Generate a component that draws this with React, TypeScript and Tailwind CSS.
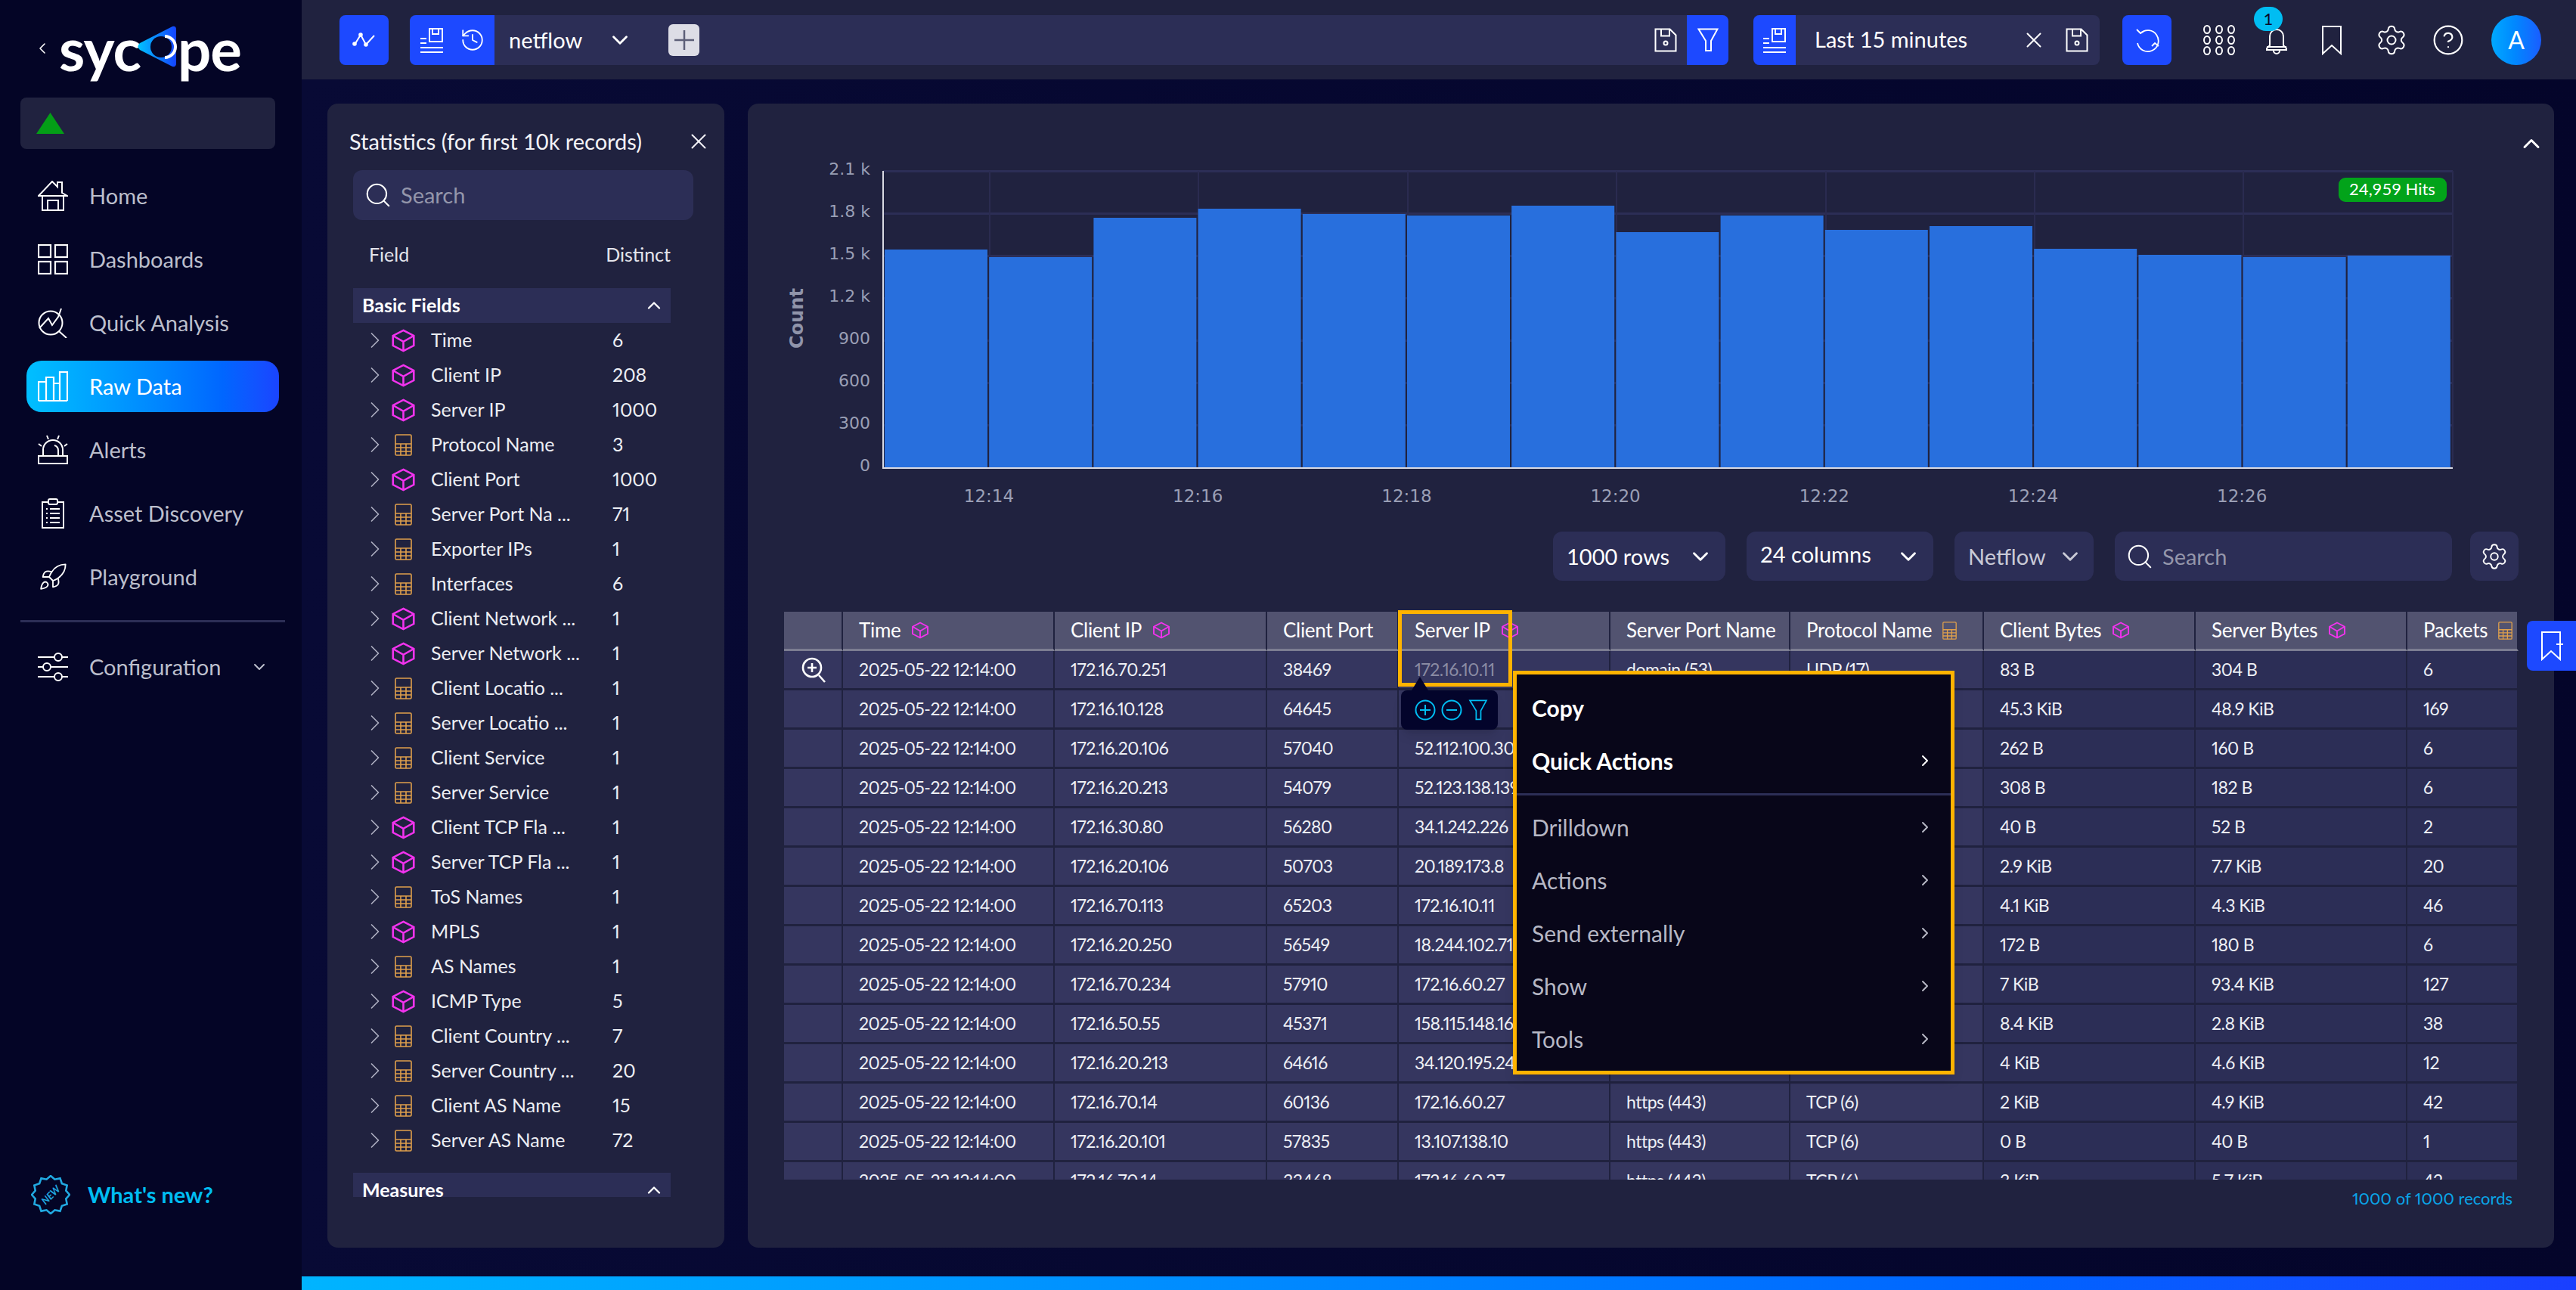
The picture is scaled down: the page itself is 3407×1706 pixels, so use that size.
import { ChevronDown, ChevronLeft, ChevronRight, ChevronUp, CircleHelp, History, Rocket, Search, Settings, X } from "lucide-react";

const font = { fontFamily: '"Lato", "Open Sans", sans-serif' };

/* icons ------------------------------------------------------------------ */
const Cube = ({ className = "w-[33px] h-[31px]" }: { className?: string }) => (
  <svg viewBox="0 0 24 24" preserveAspectRatio="none" className={className} fill="none" stroke="#f233ee" strokeWidth="1.9">
    <path d="M12 1.5 22 7v10l-10 5.5L2 17V7Z" />
    <path d="M2 7l10 6 10-6M12 13v9.5" />
  </svg>
);

const Calc = ({ className = "w-[23px] h-[29px]" }: { className?: string }) => (
  <svg viewBox="0 0 23 29" className={className} fill="none" stroke="#dfa04c" strokeWidth="1.6">
    <rect x="1" y="1" width="21" height="27" rx="1.5" />
    <path d="M1 13h21M1 18h21M1 23h21M8 13v15M15 13v15" />
  </svg>
);

const ListSave = () => (
  <svg viewBox="0 0 34 34" className="w-[34px] h-[34px]" fill="none" stroke="white" strokeWidth="2">
    <path d="M14 2h17v17H14zM18 2v7h8V2" />
    <path d="M2 15h8M2 21h8M2 27h30M2 33h30" />
  </svg>
);

const Save = () => (
  <svg viewBox="0 0 30 32" className="w-[30px] h-[32px]" fill="none" stroke="white" strokeWidth="2">
    <path d="M1.5 1.5h19l8 8v21h-27Z" />
    <path d="M9 1.5v9h11v-9" />
    <circle cx="15" cy="20" r="2.5" />
  </svg>
);

const Funnel = ({ color = "white", className = "w-[28px] h-[32px]" }: { color?: string; className?: string }) => (
  <svg viewBox="0 0 28 32" className={className} fill="none" stroke={color} strokeWidth="2">
    <path d="M1.5 1.5h25L18 17v13h-7V17Z" />
  </svg>
);

const Bookmark = ({ plus = false }: { plus?: boolean }) => (
  <svg viewBox="0 0 30 40" className="w-[30px] h-[40px]" fill="none" stroke="white" strokeWidth="2">
    <path d="M2 38V2h24v36L14 27Z" />
    {plus && <path d="M26 13v10M21 18h9" />}
  </svg>
);

const AppsGrid = () => (
  <svg viewBox="0 0 42 40" className="w-[42px] h-[40px]" fill="none" stroke="white" strokeWidth="2">
    {[6, 20, 34].map((y) => [5, 21, 37].map((x) => <ellipse key={`${x}-${y}`} cx={x} cy={y} rx="4" ry="5" />))}
  </svg>
);

const Bell = () => (
  <svg viewBox="0 0 32 38" className="w-[32px] h-[38px]" fill="none" stroke="white" strokeWidth="2">
    <path d="M7 26V14a9 9 0 0 1 18 0v12l4 4v2H3v-2ZM3 28h26M12 33a4 4 0 0 0 8 0M16 2v3" />
  </svg>
);

const HomeIcon = () => (
  <svg viewBox="0 0 40 40" className="w-[40px] h-[40px]" fill="none" stroke="white" strokeWidth="2">
    <path d="M1 20 19 1l7 7V2h6v14l7 4Z" />
    <path d="M6 20v19h28V20M13 39V26h14v13" />
  </svg>
);

const DashIcon = () => (
  <svg viewBox="0 0 40 40" className="w-[40px] h-[40px]" fill="none" stroke="white" strokeWidth="2.2">
    <rect x="1" y="1" width="16" height="16" />
    <rect x="23" y="1" width="16" height="16" />
    <rect x="1" y="23" width="16" height="16" />
    <rect x="23" y="23" width="16" height="16" />
  </svg>
);

const AnalysisIcon = () => (
  <svg viewBox="0 0 40 40" className="w-[40px] h-[40px]" fill="none" stroke="white" strokeWidth="2">
    <circle cx="17" cy="20" r="15.5" />
    <path d="M2 27 14 14l5 9 8-11 4-11M28 31l10 9" />
  </svg>
);

const BarsIcon = () => (
  <svg viewBox="0 0 40 40" className="w-[40px] h-[40px]" fill="none" stroke="white" strokeWidth="2.2">
    <path d="M1 39V14h10v25M11 39V8h10v31M21 39V16h8v23M29 39V1h10v38M1 39h38" />
  </svg>
);

const SirenIcon = () => (
  <svg viewBox="0 0 40 40" className="w-[40px] h-[40px]" fill="none" stroke="white" strokeWidth="2">
    <path d="M7 28V20a13 13 0 0 1 26 0v8M1 28h38v10H1ZM22 14a7 7 0 0 1 5 7v7M1 12l4 3M39 12l-4 3M12 1l2 5M28 1l-2 5" />
  </svg>
);

const ClipIcon = () => (
  <svg viewBox="0 0 32 40" className="w-[32px] h-[40px]" fill="none" stroke="white" strokeWidth="2">
    <path d="M10 5H2v34h28V5h-8" />
    <rect x="10" y="1" width="12" height="7" rx="2" />
    <path d="M7 14h2M12 14h13M7 20h2M12 20h13M7 26h2M12 26h13M7 32h2M12 32h13" />
  </svg>
);

const SlidersIcon = () => (
  <svg viewBox="0 0 40 40" className="w-[40px] h-[40px]" fill="none" stroke="white" strokeWidth="2">
    <path d="M0 7h22M32 7h8M0 20h7M17 20h23M0 33h22M32 33h8" />
    <circle cx="27" cy="7" r="5" />
    <circle cx="12" cy="20" r="5" />
    <circle cx="27" cy="33" r="5" />
  </svg>
);

const NewBadge = () => {
  const pts = Array.from({ length: 24 }, (_, i) => {
    const a = (i / 24) * Math.PI * 2;
    const r = i % 2 ? 21 : 25;
    return `${26 + r * Math.cos(a)},${26 + r * Math.sin(a)}`;
  }).join(" ");
  return (
    <svg viewBox="0 0 52 52" className="w-[52px] h-[52px]">
      <polygon points={pts} fill="none" stroke="#21a9e1" strokeWidth="2.6" />
      <text x="26" y="31" textAnchor="middle" fontSize="13" fontWeight="700" fontStyle="italic" fill="#21a9e1" transform="rotate(-45 26 26)" style={font}>
        NEW
      </text>
    </svg>
  );
};

const Logo = () => (
  <div className="flex items-center text-white font-bold text-[78px] leading-none tracking-[-1px] h-[60px]">
    <span>syc</span>
    <svg viewBox="0 0 54 55" className="w-[54px] h-[55px] -mt-1 -ml-[4px] -mr-[1px]">
      <defs>
        <linearGradient id="logo-g" x1="0" x2="1" y1="0" y2="0">
          <stop offset="0" stopColor="#00c3ff" />
          <stop offset="1" stopColor="#1544ff" />
        </linearGradient>
      </defs>
      <path d="M46 1 3 23q-5 4 0 9l43 22q5 1 5-4V5q0-5-5-4Z" fill="url(#logo-g)" />
      <circle cx="31" cy="28" r="14" fill="#050627" />
      <path d="M36 14a14 14 0 0 1 0 28" fill="none" stroke="white" strokeWidth="4" />
    </svg>
    <span>pe</span>
  </div>
);

/* data ------------------------------------------------------------------- */
const navItems = [
  { label: "Home", icon: <HomeIcon /> },
  { label: "Dashboards", icon: <DashIcon /> },
  { label: "Quick Analysis", icon: <AnalysisIcon /> },
  { label: "Raw Data", icon: <BarsIcon />, active: true },
  { label: "Alerts", icon: <SirenIcon /> },
  { label: "Asset Discovery", icon: <ClipIcon /> },
  { label: "Playground", icon: <Rocket size={40} strokeWidth={1.1} color="white" /> },
];

const fields: [string, string, boolean][] = [
  ["Time", "6", true],
  ["Client IP", "208", true],
  ["Server IP", "1000", true],
  ["Protocol Name", "3", false],
  ["Client Port", "1000", true],
  ["Server Port Na ...", "71", false],
  ["Exporter IPs", "1", false],
  ["Interfaces", "6", false],
  ["Client Network ...", "1", true],
  ["Server Network ...", "1", true],
  ["Client Locatio ...", "1", false],
  ["Server Locatio ...", "1", false],
  ["Client Service", "1", false],
  ["Server Service", "1", false],
  ["Client TCP Fla ...", "1", true],
  ["Server TCP Fla ...", "1", true],
  ["ToS Names", "1", false],
  ["MPLS", "1", true],
  ["AS Names", "1", false],
  ["ICMP Type", "5", true],
  ["Client Country ...", "7", false],
  ["Server Country ...", "20", false],
  ["Client AS Name", "15", false],
  ["Server AS Name", "72", false],
];

const columns: [string, "cube" | "calc" | null][] = [
  ["Time", "cube"],
  ["Client IP", "cube"],
  ["Client Port", null],
  ["Server IP", "cube"],
  ["Server Port Name", null],
  ["Protocol Name", "calc"],
  ["Client Bytes", "cube"],
  ["Server Bytes", "cube"],
  ["Packets", "calc"],
];

const rows = [
  ["172.16.70.251", "38469", "172.16.10.11", "domain (53)", "UDP (17)", "83 B", "304 B", "6"],
  ["172.16.10.128", "64645", "172.16.10.11", "https (443)", "TCP (6)", "45.3 KiB", "48.9 KiB", "169"],
  ["172.16.20.106", "57040", "52.112.100.30", "https (443)", "TCP (6)", "262 B", "160 B", "6"],
  ["172.16.20.213", "54079", "52.123.138.139", "https (443)", "TCP (6)", "308 B", "182 B", "6"],
  ["172.16.30.80", "56280", "34.1.242.226", "https (443)", "TCP (6)", "40 B", "52 B", "2"],
  ["172.16.20.106", "50703", "20.189.173.8", "https (443)", "TCP (6)", "2.9 KiB", "7.7 KiB", "20"],
  ["172.16.70.113", "65203", "172.16.10.11", "https (443)", "TCP (6)", "4.1 KiB", "4.3 KiB", "46"],
  ["172.16.20.250", "56549", "18.244.102.71", "https (443)", "TCP (6)", "172 B", "180 B", "6"],
  ["172.16.70.234", "57910", "172.16.60.27", "https (443)", "TCP (6)", "7 KiB", "93.4 KiB", "127"],
  ["172.16.50.55", "45371", "158.115.148.16", "https (443)", "TCP (6)", "8.4 KiB", "2.8 KiB", "38"],
  ["172.16.20.213", "64616", "34.120.195.24", "https (443)", "TCP (6)", "4 KiB", "4.6 KiB", "12"],
  ["172.16.70.14", "60136", "172.16.60.27", "https (443)", "TCP (6)", "2 KiB", "4.9 KiB", "42"],
  ["172.16.20.101", "57835", "13.107.138.10", "https (443)", "TCP (6)", "0 B", "40 B", "1"],
  ["172.16.70.14", "33468", "172.16.60.27", "https (443)", "TCP (6)", "3 KiB", "5.7 KiB", "42"],
];

const barTops = [330, 340, 288, 276, 283, 285, 272, 307, 285, 304, 299, 329, 337, 340, 338];
const yLabels = ["2.1 k", "1.8 k", "1.5 k", "1.2 k", "900", "600", "300", "0"];
const xTicks = ["12:14", "12:16", "12:18", "12:20", "12:22", "12:24", "12:26"];

const GRID_COLS = "grid grid-cols-[78px_280px_281px_174px_280px_238px_256px_280px_280px_147px]";

/* histogram, coordinates are relative to the card's top-left corner ------- */
function Histogram() {
  const ox = 989;
  const oy = 137;
  return (
    <svg width="2389" height="566" className="block" fontFamily='"DejaVu Sans", sans-serif'>
      {yLabels.map((_, i) => (
        <rect key={i} x={1168 - ox} y={225 + i * 56 - oy} width="2076" height="3" fill="#2c2e56" />
      ))}
      {[1308, 1584, 1861, 2137, 2414, 2690, 2966, 3243].map((x) => (
        <rect key={x} x={x - ox} y={226 - oy} width="2" height="392" fill="#2a2b50" />
      ))}
      {barTops.map((top, i) => (
        <rect key={i} x={1170 + i * 138.2 - ox} y={top - oy} width="136" height={618 - top} fill="#286fdd" />
      ))}
      <rect x={1167 - ox} y={226 - oy} width="2" height="394" fill="#d9dae3" />
      <rect x={1167 - ox} y={618 - oy} width="2077" height="2" fill="#d9dae3" />
      {yLabels.map((l, i) => (
        <text key={l} x={1151 - ox} y={231 + i * 56 - oy} textAnchor="end" fontSize="22" fill="#9a9fb5">
          {l}
        </text>
      ))}
      {xTicks.map((t, i) => (
        <text key={t} x={1308 + i * 276.2 - ox} y={664 - oy} textAnchor="middle" fontSize="23" fill="#9a9fb5">
          {t}
        </text>
      ))}
      <text x="0" y="0" transform={`translate(${1062 - ox} ${421 - oy}) rotate(-90)`} textAnchor="middle" fontSize="24" fontWeight="700" fill="#9094aa">
        Count
      </text>
      <rect x={3093 - ox} y={235 - oy} width="143" height="32" rx="9" fill="#02a31a" />
      <text x={3164 - ox} y={258 - oy} textAnchor="middle" fontSize="22" fill="white" style={font}>
        24,959 Hits
      </text>
    </svg>
  );
}

function Sidebar() {
  return (
    <aside className="w-[399px] shrink-0 bg-[#040526] flex flex-col">
      <div className="flex items-center h-[129px] pl-[44px] pb-[2px]">
        <ChevronLeft size={24} color="white" strokeWidth={1.6} className="mr-[10px]" />
        <Logo />
      </div>
      <div className="mx-[27px] w-[337px] h-[68px] bg-[#20223f] rounded-lg flex items-center pl-[21px]">
        <div className="w-[37px] h-[28px] bg-[#049e17] [clip-path:polygon(50%_0,100%_100%,0_100%)]" />
      </div>
      <nav className="mt-[28px] flex flex-col gap-[16px] pl-[35px]">
        {navItems.map((n) => (
          <div
            key={n.label}
            className={`w-[334px] h-[68px] rounded-[20px] flex items-center pl-[15px] text-[29px] ${
              n.active ? "bg-gradient-to-r from-[#00bfff] to-[#1a44ff] text-white" : "text-[#bcbfcc]"
            }`}
          >
            <span className="w-[40px] h-[40px] flex items-center justify-center">{n.icon}</span>
            <span className="ml-[28px]">{n.label}</span>
          </div>
        ))}
      </nav>
      <div className="mx-[27px] w-[350px] h-[3px] bg-[#2c2e56] mt-[23px]" />
      <div className="mt-[25px] ml-[50px] h-[68px] flex items-center text-[29px] text-[#bcbfcc]">
        <SlidersIcon />
        <span className="ml-[28px] w-[213px]">Configuration</span>
        <ChevronDown size={24} color="#bcbfcc" />
      </div>
      <div className="mt-auto mb-[100px] ml-[41px] flex items-center text-[#00bdf2] text-[29px] font-bold">
        <NewBadge />
        <span className="ml-[23px]">What's new?</span>
      </div>
    </aside>
  );
}

function TopBar() {
  return (
    <header className="h-[105px] shrink-0 bg-[#20223f] flex items-center pl-[50px] text-white">
      <div className="w-[65px] h-[66px] rounded-lg bg-[#1d49ff] flex items-center justify-center">
        <svg viewBox="0 0 32 32" className="w-[32px] h-[32px]" fill="none" stroke="white" strokeWidth="2">
          <path d="M3 22 11 9l7 13 11-12" />
          <circle cx="3" cy="21" r="1.8" fill="white" />
          <circle cx="11" cy="9" r="1.8" fill="white" />
          <circle cx="18" cy="22" r="1.8" fill="white" />
        </svg>
      </div>
      <div className="ml-[28px] w-[1744px] h-[66px] rounded-lg bg-[#2c2e56] flex items-center overflow-hidden">
        <div className="w-[112px] h-full bg-[#1d49ff] flex items-center justify-between px-[12px]">
          <ListSave />
          <History size={34} strokeWidth={1.3} />
        </div>
        <span className="ml-[19px] text-[29px] w-[130px]">netflow</span>
        <ChevronDown size={34} strokeWidth={2} />
        <div className="ml-[47px] w-[41px] h-[42px] rounded-md bg-[#dddde6] flex items-center justify-center">
          <svg viewBox="0 0 26 26" className="w-[26px] h-[26px]" stroke="#5d5f78" strokeWidth="2.5">
            <path d="M13 0v26M0 13h26" />
          </svg>
        </div>
        <div className="ml-auto mr-[13px]">
          <Save />
        </div>
        <div className="w-[55px] h-full bg-[#1d49ff] flex items-center justify-center">
          <Funnel />
        </div>
      </div>
      <div className="ml-[33px] w-[458px] h-[66px] rounded-lg bg-[#2c2e56] flex items-center overflow-hidden">
        <div className="w-[56px] h-full bg-[#1d49ff] flex items-center justify-center">
          <ListSave />
        </div>
        <span className="ml-[25px] text-[29px] w-[273px] -translate-y-[1px]">Last 15 minutes</span>
        <X size={34} strokeWidth={1.4} />
        <span className="ml-[25px]">
          <Save />
        </span>
      </div>
      <div className="ml-[30px] w-[65px] h-[66px] rounded-lg bg-[#1d49ff] flex items-center justify-center">
        <svg viewBox="0 0 32 36" className="w-[32px] h-[36px]" fill="none" stroke="white" strokeWidth="1.8">
          <path d="M7 9A14 14 0 1 1 3 22M2 4l5 5 5-3M31 26l-5-4-4 4" />
        </svg>
      </div>
      <div className="ml-[42px] w-[42px]">
        <AppsGrid />
      </div>
      <div className="relative ml-[39px] w-[32px] h-[38px]">
        <Bell />
        <span className="absolute -top-[25px] -left-[14px] w-[38px] h-[32px] rounded-full bg-[#00bdf2] text-[#0a0b2a] text-[22px] flex items-center justify-center">
          1
        </span>
      </div>
      <div className="ml-[43px]">
        <Bookmark />
      </div>
      <Settings className="ml-[41px]" size={44} strokeWidth={1.1} />
      <CircleHelp className="ml-[31px]" size={44} strokeWidth={1.2} />
      <div className="ml-[35px] w-[66px] h-[66px] rounded-full bg-gradient-to-r from-[#00a9ff] to-[#1a5cff] flex items-center justify-center text-[32px]">
        A
      </div>
    </header>
  );
}

function StatsPanel() {
  return (
    <section className="w-[525px] shrink-0 bg-[#20223f] rounded-[14px] text-white flex flex-col">
      <div className="mt-[30px] h-[40px] pl-[29px] flex items-center text-[29px] text-[#f3f3f7]">
        <span className="w-[445px] whitespace-nowrap">Statistics (for first 10k records)</span>
        <X size={34} strokeWidth={1.4} />
      </div>
      <div className="ml-[34px] mt-[18px] w-[450px] h-[66px] rounded-xl bg-[#2c2e56] flex items-center pl-[14px] text-[29px] text-[#9496ab]">
        <Search size={38} strokeWidth={1.3} color="white" />
        <span className="ml-[11px]">Search</span>
      </div>
      <div className="ml-[55px] mt-[23px] w-[399px] h-[46px] flex items-center justify-between text-[25px] text-[#e4e5ec]">
        <span>Field</span>
        <span>Distinct</span>
      </div>
      <div className="ml-[34px] mt-[21px] w-[420px] h-[1202px] overflow-hidden">
        <div className="h-[46px] bg-[#2c2e56] flex items-center justify-between pl-[12px] pr-[8px] font-bold text-[25px]">
          Basic Fields
          <ChevronUp size={28} />
        </div>
        {fields.map(([name, count, cube]) => (
          <div key={name} className="grid grid-cols-[50px_53px_240px_1fr] items-center h-[46px] text-[25px] text-[#eceef3] proportional-nums">
            <ChevronRight size={36} strokeWidth={1.1} color="#aeb0c2" className="ml-[11px]" />
            {cube ? <Cube /> : <Calc className="w-[23px] h-[29px] ml-[5px]" />}
            <span>{name}</span>
            <span>{count}</span>
          </div>
        ))}
        <div className="mt-[20px] h-[46px] bg-[#2c2e56] flex items-center justify-between pl-[12px] pr-[8px] font-bold text-[25px]">
          Measures
          <ChevronUp size={28} />
        </div>
      </div>
    </section>
  );
}

function RowCell({ text, dark, muted }: { text: string; dark: boolean; muted?: boolean }) {
  return (
    <div
      className={`h-[52px] border-r-2 border-b-[3px] border-[#20223f] pl-[21px] flex items-center overflow-hidden whitespace-nowrap ${
        dark ? "bg-[#2c2e56]" : "bg-[#35365f]"
      } ${muted ? "text-[#8a8ba3]" : "text-[#eef0f5]"}`}
    >
      {text}
    </div>
  );
}

function DataTable() {
  return (
    <div className="relative ml-[48px] w-[2294px] mt-[41px] text-[23px] tracking-[-0.5px] proportional-nums">
      <div className="h-[751px] overflow-hidden">
        <div className={GRID_COLS}>
          <div className="h-[52px] bg-[#525370] border-r-2 border-b-[3px] border-r-[#20223f] border-b-[#7c7d92]" />
          {columns.map(([name, icon]) => (
            <div key={name} className="h-[52px] bg-[#525370] border-r-2 border-b-[3px] border-r-[#20223f] border-b-[#7c7d92] pl-[21px] flex items-center text-white text-[26px] tracking-[-0.3px] whitespace-nowrap">
              {name}
              {icon === "cube" && <Cube className="w-[24px] h-[23px] ml-[14px] shrink-0" />}
              {icon === "calc" && <Calc className="w-[19px] h-[24px] ml-[14px] shrink-0" />}
            </div>
          ))}
          {rows.map((r, i) => [
            <div key={`z${i}`} className="h-[52px] bg-[#35365f] border-r-2 border-b-[3px] border-[#20223f] flex items-center justify-center">
              {i === 0 && (
                <svg viewBox="0 0 34 34" className="w-[34px] h-[34px] ml-[3px]" fill="none" stroke="white" strokeWidth="2.6">
                  <circle cx="14" cy="14" r="12" />
                  <path d="M14 8v12M8 14h12M23 24l8 9" />
                </svg>
              )}
            </div>,
            <RowCell key={`t${i}`} text="2025-05-22 12:14:00" dark={false} />,
            ...r.slice(0, 5).map((c, j) => <RowCell key={`${i}-${j}`} text={c} dark={false} muted={i === 0 && j === 2} />),
            ...r.slice(5).map((c, j) => <RowCell key={`${i}-m${j}`} text={c} dark />),
          ])}
        </div>
      </div>

      {/* highlighted cell ------------------------------------------------- */}
      <div className="absolute left-[812px] -top-[2px] w-[151px] h-[101px] border-[5px] border-[#ffb300]" />

      {/* cell quick actions tooltip --------------------------------------- */}
      <div className="absolute left-[816px] top-[104px] w-[128px] h-[52px] rounded-lg bg-[#03042b] flex items-center pl-[18px] gap-[7px] shadow-lg">
        <span className="absolute left-[14px] -top-[18px] w-[22px] h-[18px] bg-[#03042b] [clip-path:polygon(50%_0,100%_100%,0_100%)]" />
        <svg viewBox="0 0 28 28" className="w-[28px] h-[28px]" fill="none" stroke="#00bdf2" strokeWidth="2">
          <circle cx="14" cy="14" r="12.5" />
          <path d="M14 7v14M7 14h14" />
        </svg>
        <svg viewBox="0 0 28 28" className="w-[28px] h-[28px]" fill="none" stroke="#00bdf2" strokeWidth="2">
          <circle cx="14" cy="14" r="12.5" />
          <path d="M7 14h14" />
        </svg>
        <Funnel color="#00bdf2" className="w-[28px] h-[28px]" />
      </div>

      {/* context menu ----------------------------------------------------- */}
      <div className="absolute left-[964px] top-[78px] w-[584px] h-[534px] border-[5px] border-[#ffb300] bg-[#080619] text-[30px] tracking-normal shadow-lg">
        <div className="mt-[9px] pl-[20px] h-[70px] flex items-center font-bold text-white">Copy</div>
        <div className="pl-[20px] pr-[22px] h-[70px] flex items-center justify-between font-bold text-white">
          Quick Actions
          <ChevronRight size={24} />
        </div>
        <div className="h-[3px] mt-[8px] bg-[#2c2e56]" />
        {["Drilldown", "Actions", "Send externally", "Show", "Tools"].map((m, i) => (
          <div key={m} className={`${i === 0 ? "mt-[7px]" : ""} pl-[20px] pr-[22px] h-[70px] flex items-center justify-between text-[#b6b7c4]`}>
            {m}
            <ChevronRight size={24} />
          </div>
        ))}
      </div>
    </div>
  );
}

function MainCard() {
  const selectCls = "h-[65px] rounded-xl bg-[#2c2e56] flex items-center justify-between text-[29px]";
  return (
    <section className="relative w-[2389px] shrink-0 bg-[#20223f] rounded-[14px] text-white">
      <ChevronUp className="absolute right-[12px] top-[35px]" size={36} strokeWidth={2} />
      <Histogram />
      <div className="flex justify-end gap-[28px] pr-[47px]">
        <div className={`${selectCls} w-[228px] pl-[18px] pr-[16px]`}>
          1000 rows <ChevronDown size={34} strokeWidth={2} />
        </div>
        <div className={`${selectCls} w-[247px] pl-[18px] pr-[16px]`}>
          <span className="-translate-y-[3px]">24 columns</span> <ChevronDown size={34} strokeWidth={2} />
        </div>
        <div className={`${selectCls} w-[184px] pl-[18px] pr-[14px] text-[#c9cad6]`}>
          Netflow <ChevronDown size={34} strokeWidth={2} />
        </div>
        <div className={`${selectCls} w-[446px] pl-[14px] !justify-start text-[#9496ab]`}>
          <Search size={38} strokeWidth={1.3} color="white" />
          <span className="ml-[11px]">Search</span>
        </div>
        <div className={`${selectCls} w-[64px] !justify-center -ml-[4px]`}>
          <Settings size={38} strokeWidth={1.2} />
        </div>
      </div>
      <DataTable />
      <div className="mt-[8px] pr-[55px] text-right text-[22px] text-[#0aa5e8] proportional-nums">1000 of 1000 records</div>
      <div className="absolute -right-[29px] top-[684px] w-[65px] h-[66px] rounded-l-lg bg-[#1d49ff] flex items-center justify-center">
        <Bookmark plus />
      </div>
    </section>
  );
}

export default function App() {
  return (
    <div className="w-[3407px] h-[1706px] flex overflow-hidden bg-[#040526]" style={font}>
      <Sidebar />
      <main className="flex-1 flex flex-col min-w-0">
        <TopBar />
        <div className="flex-1 min-h-0 flex gap-[31px] pl-[34px] pt-[32px] pb-[38px] bg-gradient-to-r from-[#080a35] to-[#04052a]">
          <StatsPanel />
          <MainCard />
        </div>
        <div className="h-[18px] shrink-0 bg-gradient-to-r from-[#00b4ff] to-[#1a3fff]" />
      </main>
    </div>
  );
}
